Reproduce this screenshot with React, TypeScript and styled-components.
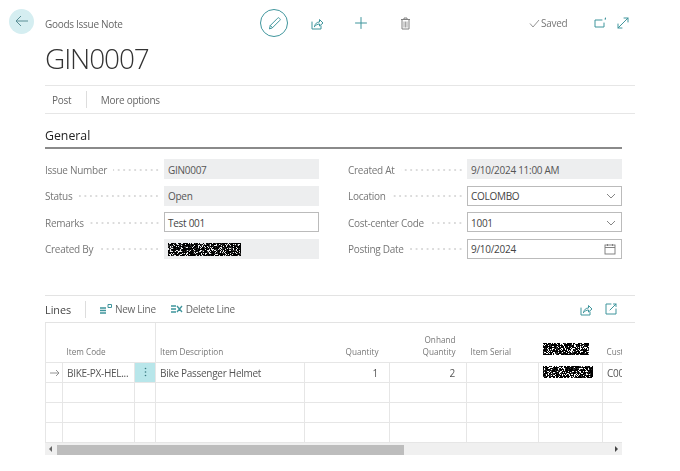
import React from 'react';
import styled, { createGlobalStyle } from 'styled-components';

const Global = createGlobalStyle`
  html, body { margin: 0; padding: 0; background: #fff; }
  body { font-family: "Open Sans", "Noto Sans", "Liberation Sans", sans-serif; color: #333; width: 680px; height: 471px; overflow: hidden; letter-spacing: -0.28px; }
`;
const TEAL = '#3f959c';
const Page = styled.div`width: 680px; height: 471px; display: flex; flex-direction: column; filter: blur(0.3px);`;
const TopBar = styled.header`height: 46px; display: flex; align-items: center; padding: 0 0 0 9px; box-sizing: border-box;`;
const BackButton = styled.div`width: 25px; height: 25px; border-radius: 50%; background: #d5eef1; display: flex; align-items: center; justify-content: center; margin-top: -4px;`;
const Breadcrumb = styled.div`font-size: 10px; color: #666; margin-left: 11px; width: 215px; margin-top: 2px;`;
const EditCircle = styled.div`width: 28px; height: 28px; box-sizing: border-box; border: 1px solid ${TEAL}; border-radius: 50%; display: flex; align-items: center; justify-content: center;`;
const TopIcon = styled.div<{ $gap: number }>`display: flex; width: 16px; height: 16px; align-items: center; justify-content: center; margin-left: ${p => p.$gap}px;`;
const Saved = styled.div`display: flex; align-items: center; gap: 1px; font-size: 10px; color: #777; margin-left: 116px; width: 60px;`;
const Title = styled.h1`margin: -3px 0 3px 45px; font-weight: 300; font-size: 28px; line-height: 30px; height: 39px; color: #333; letter-spacing: -1.1px;`;
const ActionBar = styled.nav`margin-left: 45px; width: 590px; height: 29px; box-sizing: border-box; border-top: 1px solid #e6e6e6; border-bottom: 1px solid #e6e6e6; display: flex; align-items: center; font-size: 10px; color: #666;`;
const ActionItem = styled.span`padding: 0 7px;`;
const ActionSep = styled.span`width: 1px; height: 17px; background: #ddd; margin: 0 7px 0 7.5px;`;
const Section = styled.section`margin: 12px 0 0 45px; width: 577px;`;
const SectionTitle = styled.h2`margin: 0; font-size: 12.3px; font-weight: 500; letter-spacing: 0; color: #222; line-height: 20px; height: 21px; border-bottom: 2px solid #8a8a8a; box-sizing: content-box;`;
const FieldGrid = styled.div`display: grid; grid-template-columns: 274px 274px; column-gap: 29px; margin-top: 10px;`;
const FieldColumn = styled.div`display: flex; flex-direction: column; gap: 6.67px;`;
const FieldRow = styled.div`display: flex; height: 20px; align-items: center;`;
const FieldLabel = styled.div`flex: 0 0 119px; box-sizing: border-box; display: flex; align-items: center; font-size: 10px; color: #777; overflow: hidden; padding: 1px 4px 0 0;`;
const LabelText = styled.span`white-space: nowrap;`;
const Leader = styled.span`flex: 1; margin-left: 6px; min-width: 0; height: 2px; background-image: radial-gradient(circle, #c4c4c4 0.6px, transparent 0.8px); background-size: 5.5px 2px; background-position: right center;`;
const Value = styled.div<{ $editable?: boolean }>`
  flex: 0 0 155px; height: 20px; box-sizing: border-box; display: flex; align-items: center; justify-content: space-between;
  padding: 1px 5px 0 ${p => p.$editable ? 3 : 4}px; font-size: 10px; color: ${p => p.$editable ? '#444' : '#555'};
  background: ${p => p.$editable ? '#fff' : '#edeeef'};
  border: ${p => p.$editable ? '1px solid #bbb' : 'none'};
`;
const LinesPart = styled.section`margin: 36px 0 0 45px; width: 590px;`;
const LinesBar = styled.div`height: 28px; box-sizing: border-box; border-top: 1px solid #e3e3e3; border-bottom: 1px solid #e3e3e3; padding-top: 1px; display: flex; align-items: center; font-size: 10px; color: #666;`;
const LinesTitle = styled.span`font-weight: 500; font-size: 10.8px; letter-spacing: 0; color: #444; width: 40px;`;
const BarSep = styled.span`width: 1px; height: 17px; background: #ddd; margin-right: 14px;`;
const BarAction = styled.span`display: flex; align-items: center; gap: 3px; margin-right: 15px; color: #666;`;
const BarRight = styled.span`margin-left: auto; display: flex; gap: 12px; margin-right: 18px;`;
const GridWrap = styled.div`width: 577px; overflow: hidden;`;
const Table = styled.table`border-collapse: collapse; table-layout: fixed; width: 578px; font-size: 10px; border-left: 1px solid #e6e6e6;`;
const Head = styled.th<{ $right?: boolean; $line?: boolean }>`
  height: 40px; padding: 0 ${p => p.$right ? 11 : 4}px 4px 4px; vertical-align: bottom; font-weight: 400; font-size: 8.2px; letter-spacing: 0; line-height: 12px; color: #777;
  text-align: ${p => p.$right ? 'right' : 'left'}; border-bottom: 1px solid #e6e6e6; box-sizing: border-box;
  border-right: ${p => p.$line ? '1px solid #e6e6e6' : 'none'}; white-space: nowrap; overflow: hidden;
`;
const Cell = styled.td<{ $right?: boolean; $active?: boolean }>`
  height: 20px; padding: 1px ${p => p.$right ? 11 : 4}px 0 4px; box-sizing: border-box; border-right: 1px solid #e6e6e6; border-bottom: 1px solid #e6e6e6;
  text-align: ${p => p.$right ? 'right' : 'left'}; color: #555; white-space: nowrap; overflow: hidden;
  background: ${p => p.$active ? '#b8e6ea' : 'transparent'};
`;
const Scrollbar = styled.div`width: 577px; height: 12px; background: #f0f0f0; display: flex; align-items: center; justify-content: space-between; box-sizing: border-box; position: relative; padding: 0 4px;`;
const Thumb = styled.div`position: absolute; left: 12px; top: 2px; bottom: 0.5px; width: 347px; background: #bdbdbd;`;
const Arrow = styled.span<{ $right?: boolean }>`
  width: 0; height: 0; border-top: 3px solid transparent; border-bottom: 3px solid transparent;
  ${p => p.$right ? 'border-left: 3px solid #444;' : 'border-right: 3px solid #666;'}
`;

function Redacted({ w, h, seed }: { w: number; h: number; seed: number }) {
  let s = seed;
  const rnd = () => { s = (s * 16807) % 2147483647; return s / 2147483647; };
  const rects: React.ReactElement[] = [];
  for (let y = 0; y < h; y++) for (let x = 0; x < w; x++) {
    const v = rnd();
    if (v < 0.78) rects.push(<rect key={x + '-' + y} x={x} y={y} width="1" height="1" fill={v < 0.6 ? '#000' : '#333'} />);
  }
  return <svg width={w} height={h}>{rects}</svg>;
}

const I = { fill: 'none', stroke: TEAL, strokeWidth: 1, strokeLinecap: 'round' as const, strokeLinejoin: 'round' as const };
const ShareIcon = ({ c = TEAL }: { c?: string }) => (
  <svg width="13" height="13" viewBox="0 0 13 13" {...I} stroke={c}>
    <path d="M1 5v7h9V9" /><path d="M3.5 9.5C4 6.5 6 5 8.5 5V2.5L12 6 8.5 9V7C6.5 7 5 8 3.5 9.5z" />
  </svg>
);
const F = ({ l, v, e, right, seed }: { l: string; v?: string; e?: boolean; right?: React.ReactNode; seed?: number }) => (
  <FieldRow>
    <FieldLabel><LabelText>{l}</LabelText><Leader /></FieldLabel>
    <Value $editable={e}>
      {seed ? <Redacted w={73} h={13} seed={seed} /> : <span>{v}</span>}
      {right}
    </Value>
  </FieldRow>
);
const Chevron = () => <svg width="10" height="6" viewBox="0 0 10 6" fill="none" stroke="#777" strokeWidth="0.9"><path d="M1 1l4 4 4-4" /></svg>;
const Calendar = () => (
  <svg width="12" height="12" viewBox="0 0 12 12" fill="none" stroke="#777" strokeWidth="0.9"><rect x="1" y="2" width="10" height="9" /><path d="M1 4.5h10M3.5 1v2M8.5 1v2" /></svg>
);
const cols = [17, 72, 21, 149, 85, 77, 72, 64, 21];

export default function App() {
  return (
    <Page>
      <Global />
      <TopBar>
        <BackButton>
          <svg width="14" height="12" viewBox="0 0 14 12" fill="none" stroke="#5a8f96" strokeWidth="1"><path d="M13 6H1M6 1L1 6l5 5" /></svg>
        </BackButton>
        <Breadcrumb>Goods Issue Note</Breadcrumb>
        <EditCircle>
          <svg width="13" height="13" viewBox="0 0 13 13" {...I}><path d="M1.5 11.5l.8-3L9.5 1.3a1.2 1.2 0 0 1 1.9 0l.3.3a1.2 1.2 0 0 1 0 1.9L4.5 10.7z" /><path d="M2.3 8.5l2.2 2.2" /></svg>
        </EditCircle>
        <TopIcon $gap={21}><ShareIcon /></TopIcon>
        <TopIcon $gap={28}>
          <svg width="12" height="12" viewBox="0 0 12 12" {...I}><path d="M6 0.5v11M0.5 6h11" /></svg>
        </TopIcon>
        <TopIcon $gap={28}>
          <svg width="11" height="13" viewBox="0 0 11 13" fill="none" stroke="#808080" strokeWidth="1"><path d="M1 2.5h9M2 2.5V12h7V2.5M4 2.5V1h3v1.5" /><path d="M4 4.5V10.5M5.5 4.5V10.5M7 4.5V10.5" strokeWidth="0.7" /></svg>
        </TopIcon>
        <Saved>
          <svg width="11" height="9" viewBox="0 0 11 9" fill="none" stroke="#888" strokeWidth="0.9"><path d="M1 4.5L4 8l6-7" /></svg>
          Saved
        </Saved>
        <TopIcon $gap={3}>
          <svg width="13" height="12" viewBox="0 0 13 12" {...I}><path d="M8 3H1v7h9V6" /><path d="M11 2h.5M11.5 1v.8" /></svg>
        </TopIcon>
        <TopIcon $gap={7}>
          <svg width="12" height="12" viewBox="0 0 12 12" {...I}><path d="M1 11L11 1M7 1h4v4M1 7v4h4" /></svg>
        </TopIcon>
      </TopBar>
      <Title>GIN0007</Title>
      <ActionBar>
        <ActionItem>Post</ActionItem>
        <ActionSep />
        <ActionItem>More options</ActionItem>
      </ActionBar>
      <Section>
        <SectionTitle>General</SectionTitle>
        <FieldGrid>
          <FieldColumn>
            <F l="Issue Number" v="GIN0007" />
            <F l="Status" v="Open" />
            <F l="Remarks" v="Test 001" e />
            <F l="Created By" seed={12345} />
          </FieldColumn>
          <FieldColumn>
            <F l="Created At" v="9/10/2024 11:00 AM" />
            <F l="Location" v="COLOMBO" e right={<Chevron />} />
            <F l="Cost-center Code" v="1001" e right={<Chevron />} />
            <F l="Posting Date" v="9/10/2024" e right={<Calendar />} />
          </FieldColumn>
        </FieldGrid>
      </Section>
      <LinesPart>
        <LinesBar>
          <LinesTitle>Lines</LinesTitle>
          <BarSep />
          <BarAction>
            <svg width="12" height="10" viewBox="0 0 12 10" fill="none" stroke={TEAL} strokeWidth="1.3"><path d="M0 4h6M0 6.5h6M0 9h6" /><path d="M8 0.5h3.5v3H8z" strokeWidth="1" /></svg>
            New Line
          </BarAction>
          <BarAction>
            <svg width="12" height="10" viewBox="0 0 12 10" fill="none" stroke={TEAL} strokeWidth="1.3"><path d="M0 2h5M0 5h5M0 8h5M6 2l5 6M11 2L6 8" /></svg>
            Delete Line
          </BarAction>
          <BarRight>
            <ShareIcon />
            <svg width="12" height="12" viewBox="0 0 12 12" {...I}><path d="M6 1H1v10h10V6" /><path d="M5 7l6-6M8.5 1H11v2.5" /></svg>
          </BarRight>
        </LinesBar>
        <GridWrap>
          <Table>
            <colgroup>{cols.map((w, i) => <col key={i} style={{ width: w }} />)}</colgroup>
            <thead>
              <tr>
                <Head />
                <Head>Item Code</Head>
                <Head $line />
                <Head>Item Description</Head>
                <Head $right>Quantity</Head>
                <Head $right>Onhand<br />Quantity</Head>
                <Head>Item Serial</Head>
                <Head><Redacted w={46} h={12} seed={777} /></Head>
                <Head>Customer</Head>
              </tr>
            </thead>
            <tbody>
              <tr>
                <Cell>
                  <svg width="10" height="8" viewBox="0 0 10 8" fill="none" stroke="#888" strokeWidth="0.9"><path d="M0 4h9M6 1l3 3-3 3" /></svg>
                </Cell>
                <Cell>BIKE-PX-HEL...</Cell>
                <Cell $active style={{ textAlign: 'center', padding: 0 }}>
                  <svg width="3" height="10" viewBox="0 0 3 10" fill="#3a7a80"><circle cx="1.5" cy="1.5" r="0.8" /><circle cx="1.5" cy="5" r="0.8" /><circle cx="1.5" cy="8.5" r="0.8" /></svg>
                </Cell>
                <Cell>Bike Passenger Helmet</Cell>
                <Cell $right>1</Cell>
                <Cell $right>2</Cell>
                <Cell />
                <Cell><Redacted w={50} h={12} seed={4242} /></Cell>
                <Cell>C00</Cell>
              </tr>
              {[0, 1, 2].map(r => (
                <tr key={r}>{cols.map((_, i) => <Cell key={i} />)}</tr>
              ))}
            </tbody>
          </Table>
        </GridWrap>
        <Scrollbar>
          <Arrow />
          <Thumb />
          <Arrow $right />
        </Scrollbar>
      </LinesPart>
    </Page>
  );
}
